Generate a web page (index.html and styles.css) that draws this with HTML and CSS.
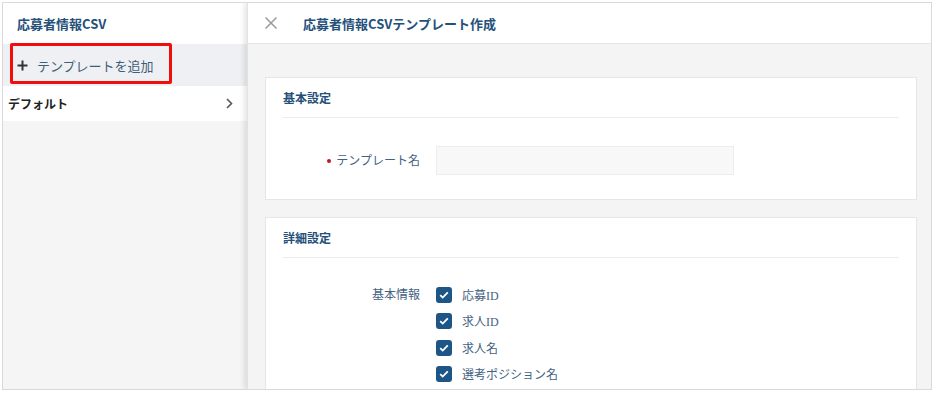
FILE: index.html
```html
<!DOCTYPE html>
<html lang="ja">
<head>
<meta charset="utf-8">
<link rel="stylesheet" href="styles.css">
</head>
<body>
<div class="frame">
  <aside class="sidebar">
    <div class="side-head">応募者情報CSV</div>
    <div class="add-row">
      <svg class="plus" width="11" height="11" viewBox="0 0 11 11"><path d="M5.5 0.5v10M0.5 5.5h10" stroke="#333" stroke-width="2" fill="none"/></svg>
      <span>テンプレートを追加</span>
      <div class="highlight"></div>
    </div>
    <div class="side-item">
      <span>デフォルト</span>
      <svg width="7" height="11" viewBox="0 0 7 11"><path d="M1 1l4.5 4.5L1 10" stroke="#555" stroke-width="1.6" fill="none"/></svg>
    </div>
  </aside>
  <main class="main">
    <header class="main-head">
      <svg class="close" width="12" height="12" viewBox="0 0 12 12"><path d="M0.5 0.5l11 11M11.5 0.5l-11 11" stroke="#9a9a9a" stroke-width="1.5" fill="none"/></svg>
      <h1 class="main-title">応募者情報CSVテンプレート作成</h1>
    </header>
    <div class="content">
      <section class="card">
        <h2 class="card-title">基本設定</h2>
        <div class="card-body basic">
          <div class="form-row">
            <label class="form-label"><span class="req"></span>テンプレート名</label>
            <div class="input"></div>
          </div>
        </div>
      </section>
      <section class="card">
        <h2 class="card-title">詳細設定</h2>
        <div class="card-body detail">
          <div class="form-row top">
            <div class="form-label">基本情報</div>
            <ul class="checks">
              <li><span class="cb"><svg width="10" height="8" viewBox="0 0 10 8"><path d="M1.2 4.2l2.5 2.4L8.8 1.3" stroke="#fff" stroke-width="1.8" fill="none"/></svg></span>応募ID</li>
              <li><span class="cb"><svg width="10" height="8" viewBox="0 0 10 8"><path d="M1.2 4.2l2.5 2.4L8.8 1.3" stroke="#fff" stroke-width="1.8" fill="none"/></svg></span>求人ID</li>
              <li><span class="cb"><svg width="10" height="8" viewBox="0 0 10 8"><path d="M1.2 4.2l2.5 2.4L8.8 1.3" stroke="#fff" stroke-width="1.8" fill="none"/></svg></span>求人名</li>
              <li><span class="cb"><svg width="10" height="8" viewBox="0 0 10 8"><path d="M1.2 4.2l2.5 2.4L8.8 1.3" stroke="#fff" stroke-width="1.8" fill="none"/></svg></span>選考ポジション名</li>
            </ul>
          </div>
        </div>
      </section>
    </div>
  </main>
</div>
</body>
</html>
```
FILE: styles.css
```css
* { box-sizing: border-box; }
html, body { margin: 0; padding: 0; background: #fff; }
body {
  font-family: "Noto Sans CJK JP", "Noto Sans", sans-serif;
  color: #333;
}
.frame {
  margin: 2px;
  width: 930px;
  height: 388px;
  border: 1px solid #d9d9d9;
  display: flex;
  overflow: hidden;
}
.sidebar {
  width: 244px;
  flex: none;
  background: #f5f5f5;
  position: relative;
}
.side-head {
  height: 41px;
  background: #fff;
  display: flex;
  align-items: center;
  padding-left: 14px;
  font-size: 13px;
  font-weight: 700;
  color: #24507a;
}
.add-row {
  position: relative;
  height: 42px;
  background: #eef0f3;
  display: flex;
  align-items: center;
  padding-left: 14px;
  font-size: 13px;
  color: #415d78;
}
.plus { margin-right: 9px; }
.highlight {
  position: absolute;
  left: 7px;
  top: -1px;
  width: 162px;
  height: 41px;
  border: 3px solid #f20d0d;
  border-radius: 2px;
}
.side-item {
  height: 35px;
  background: #fff;
  display: flex;
  align-items: center;
  justify-content: space-between;
  padding: 0 14px 0 5px;
  font-size: 12px;
  font-weight: 700;
  color: #222;
}
.main {
  flex: 1;
  background: #f4f4f4;
  border-left: 1px solid #e2e2e2;
  box-shadow: -3px 0 5px rgba(0,0,0,0.10);
  position: relative;
  z-index: 1;
  display: flex;
  flex-direction: column;
}
.main-head {
  height: 41px;
  flex: none;
  background: #fff;
  border-bottom: 1px solid #e6e6e6;
  display: flex;
  align-items: center;
  padding-left: 17px;
}
.close { margin-right: 26px; }
.main-title {
  margin: 0;
  font-size: 13px;
  font-weight: 700;
  color: #24507a;
}
.content {
  padding: 33px 14px 0 17px;
  display: flex;
  flex-direction: column;
  gap: 17px;
}
.card {
  background: #fff;
  border: 1px solid #e6e6e6;
  flex: none;
}
.card-title {
  margin: 0 17px;
  height: 40px;
  border-bottom: 1px solid #ececec;
  display: flex;
  align-items: center;
  font-size: 12px;
  font-weight: 700;
  color: #24507a;
}
.card-body.basic { padding: 28px 0 24px; }
.card-body.detail { padding: 29px 0 20px; }
.form-row {
  display: grid;
  grid-template-columns: 154px 1fr;
  column-gap: 16px;
  align-items: center;
}
.form-row.top { align-items: start; }
.form-label {
  text-align: right;
  font-family: "Liberation Serif", "Noto Sans CJK JP", serif;
  font-size: 12px;
  color: #44627f;
  display: flex;
  align-items: center;
  justify-content: flex-end;
  line-height: 16px;
}
.req {
  width: 4px;
  height: 4px;
  border-radius: 50%;
  background: #c4161c;
  margin-right: 5px;
}
.input {
  width: 298px;
  height: 29px;
  background: #f8f8f8;
  border: 1px solid #ededed;
}
.checks {
  list-style: none;
  margin: 0;
  padding: 0;
  display: flex;
  flex-direction: column;
  gap: 10.3px;
}
.checks li {
  display: flex;
  align-items: center;
  height: 16px;
  font-family: "Liberation Serif", "Noto Sans CJK JP", serif;
  font-size: 12px;
  color: #44627f;
}
.cb {
  width: 16px;
  height: 16px;
  border-radius: 3px;
  background: #1c5586;
  display: flex;
  align-items: center;
  justify-content: center;
  margin-right: 10px;
  flex: none;
}
```
